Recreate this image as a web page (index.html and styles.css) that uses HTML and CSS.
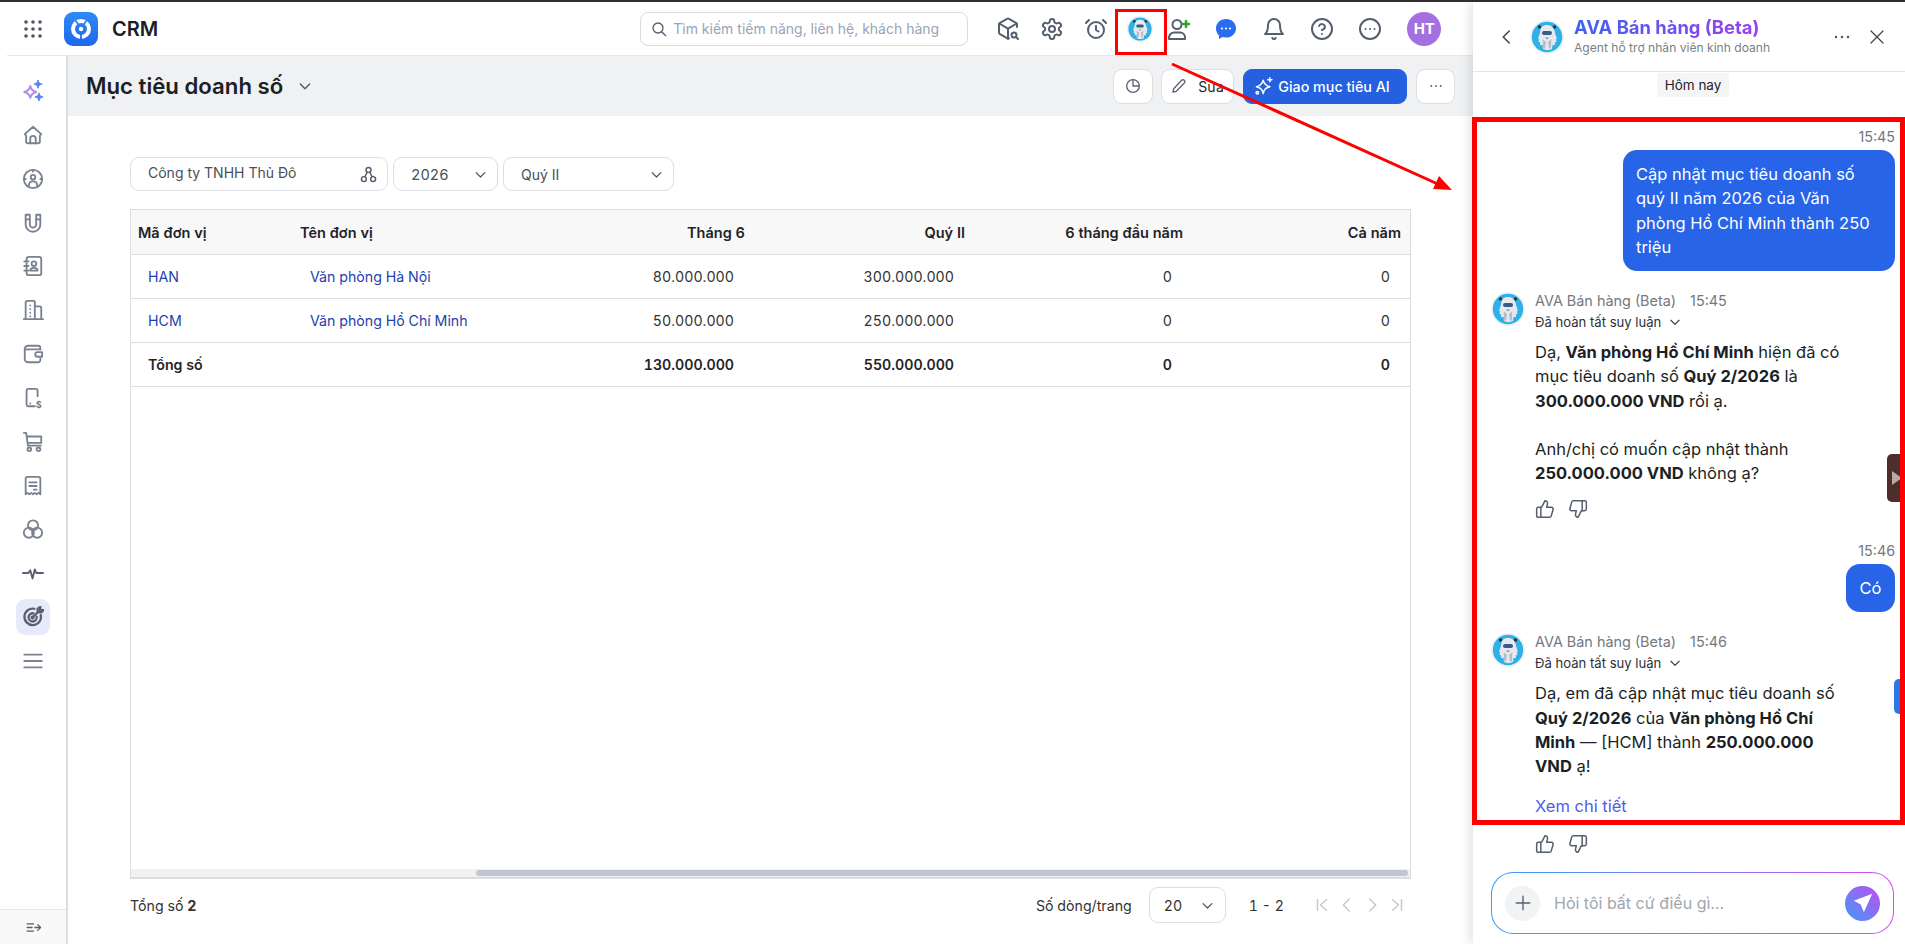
FILE: index.html
```html
<!DOCTYPE html>
<html lang="en">

<head>
    <meta charset="UTF-8">
    <meta name="viewport" content="width=device-width, initial-scale=1.0">
    <title>CRM</title>
    <link rel="stylesheet" href="styles.css">
</head>

<body>
    <!-- shared pictures -->
    <svg class="defs" width="0" height="0">
        <defs>
            <linearGradient id="logo-bg" x1="0" y1="0" x2="0" y2="1">
                <stop offset="0" stop-color="#2f8bf5" />
                <stop offset="1" stop-color="#1f66f0" />
            </linearGradient>
            <symbol id="mascot" viewBox="0 0 34 34">
                <circle cx="17" cy="17" r="17" fill="#eef2f5" />
                <circle cx="17" cy="17" r="15.2" fill="#2fb0e8" />
                <circle cx="9.500" cy="7" r="1.800" fill="#2a3542" />
                <circle cx="24.500" cy="7" r="1.800" fill="#2a3542" />
                <path d="M17 5c-4.500 0-6.500 2.500-6.800 6.500-.2 3-1.800 4.500-2 7.500l1 .5-.8 2.500 1.800.2-.2 3 2.500-.5.500 4.300c3 1.500 6 1.500 9 0l.5-4.300 2.500.5-.2-3 1.800-.2-.8-2.500 1-.5c-.2-3-1.800-4.500-2-7.500C23.500 7.500 21.500 5 17 5z" fill="#e6eaee" />
                <path d="M12.500 19c.8 3 0 6 .8 9.500h1.700l1-6.500zM21.500 19c-.8 3 0 6-.8 9.500H19l-1-6.500z" fill="#b4bec9" />
                <rect x="12" y="11" width="10" height="4" rx="2" fill="#3a5a88" />
                <path d="M15 17.500h4l-2 1.800z" fill="#7a8591" />
            </symbol>
            <symbol id="thumb-up" viewBox="0 0 24 24">
                <path d="M7 10v12" />
                <path d="M15 5.880 14 10h5.830a2 2 0 0 1 1.920 2.560l-2.330 8A2 2 0 0 1 17.500 22H4a2 2 0 0 1-2-2v-8a2 2 0 0 1 2-2h2.760a2 2 0 0 0 1.790-1.110L12 2a3.130 3.130 0 0 1 3 3.880Z" />
            </symbol>
            <symbol id="thumb-down" viewBox="0 0 24 24">
                <path d="M17 14V2" />
                <path d="M9 18.120 10 14H4.170a2 2 0 0 1-1.920-2.560l2.330-8A2 2 0 0 1 6.500 2H20a2 2 0 0 1 2 2v8a2 2 0 0 1-2 2h-2.760a2 2 0 0 0-1.790 1.110L12 22a3.130 3.130 0 0 1-3-3.880Z" />
            </symbol>
            <symbol id="chev" viewBox="0 0 24 24">
                <path d="m5 9 7 7 7-7" />
            </symbol>
        </defs>
    </svg>

    <div class="app">
        <div class="main">
            <header class="topbar">
                <svg class="ico grid-ico" viewBox="0 0 20 20">
                    <circle cx="3" cy="3" r="1.800" /><circle cx="10" cy="3" r="1.800" /><circle cx="17" cy="3" r="1.800" />
                    <circle cx="3" cy="10" r="1.800" /><circle cx="10" cy="10" r="1.800" /><circle cx="17" cy="10" r="1.800" />
                    <circle cx="3" cy="17" r="1.800" /><circle cx="10" cy="17" r="1.800" /><circle cx="17" cy="17" r="1.800" />
                </svg>
                <svg class="logo" viewBox="0 0 34 34">
                    <rect width="34" height="34" rx="9" fill="url(#logo-bg)" />
                    <circle cx="17" cy="17" r="8" fill="none" stroke="#fff" stroke-width="4" />
                    <path d="M10 6.500 17 16l7-9.500M17 16v13" fill="none" stroke="url(#logo-bg)" stroke-width="1.800" />
                    <circle cx="17" cy="17" r="2.200" fill="#fff" />
                </svg>
                <span class="brand">CRM</span>

                <div class="search">
                    <svg class="ln search-ico" viewBox="0 0 24 24"><circle cx="10.500" cy="10.500" r="7.500" /><path d="m16 16 6 6" /></svg>
                    <span>Tìm kiếm tiềm năng, liên hệ, khách hàng</span>
                </div>

                <div class="top-icons">
                    <svg class="ln top-ico" viewBox="0 0 24 24"><path d="M21 10V7.500a2 2 0 0 0-1-1.700l-7-4a2 2 0 0 0-2 0l-7 4a2 2 0 0 0-1 1.700v8a2 2 0 0 0 1 1.700l7 4a2 2 0 0 0 2 0" /><path d="M3.300 6.500 12 11.700l8.700-5.200M12 22V11.700" /><circle cx="18" cy="18" r="2.500" /><path d="m20 20 2 2" /></svg>
                    <svg class="ln top-ico" viewBox="0 0 24 24"><path d="M12.220 2h-.44a2 2 0 0 0-2 2v.18a2 2 0 0 1-1 1.730l-.43.250a2 2 0 0 1-2 0l-.15-.08a2 2 0 0 0-2.730.730l-.22.380a2 2 0 0 0 .73 2.730l.15.100a2 2 0 0 1 1 1.720v.510a2 2 0 0 1-1 1.740l-.15.090a2 2 0 0 0-.73 2.730l.22.380a2 2 0 0 0 2.730.730l.15-.08a2 2 0 0 1 2 0l.43.250a2 2 0 0 1 1 1.730V20a2 2 0 0 0 2 2h.44a2 2 0 0 0 2-2v-.18a2 2 0 0 1 1-1.730l.43-.25a2 2 0 0 1 2 0l.15.080a2 2 0 0 0 2.730-.73l.22-.39a2 2 0 0 0-.73-2.730l-.15-.08a2 2 0 0 1-1-1.740v-.5a2 2 0 0 1 1-1.740l.15-.09a2 2 0 0 0 .73-2.730l-.22-.38a2 2 0 0 0-2.730-.73l-.15.080a2 2 0 0 1-2 0l-.43-.25a2 2 0 0 1-1-1.730V4a2 2 0 0 0-2-2z" /><circle cx="12" cy="12" r="3" /></svg>
                    <svg class="ln top-ico" viewBox="0 0 24 24"><circle cx="12" cy="13" r="8" /><path d="M12 9v4l2.500 1.500M5 3 2 6M22 6l-3-3" /></svg>
                    <svg class="top-ava" viewBox="0 0 34 34"><use href="#mascot" /></svg>
                    <svg class="ln top-ico user-add" viewBox="0 0 24 24"><circle cx="10" cy="7.500" r="4.500" /><path d="M2 22v-1.500a5 5 0 0 1 5-5h6a5 5 0 0 1 5 5V22z" /><path class="plus" d="M19 4v6M16 7h6" /></svg>
                    <svg class="top-ico wide" viewBox="0 0 24 24"><path fill="#2a6cf0" d="M12 2C6.200 2 2 6.200 2 11.500c0 2.800 1.200 5.200 3 6.900V22l3.500-1.900c1.100.3 2.300.5 3.500.5 5.800 0 10-4 10-9.100C22 6.200 17.800 2 12 2z" /><circle cx="8" cy="11.500" r="1.100" fill="#fff" /><circle cx="12" cy="11.500" r="1.100" fill="#fff" /><circle cx="16" cy="11.500" r="1.100" fill="#fff" /></svg>
                    <svg class="ln top-ico wide" viewBox="0 0 24 24"><path d="M6 8a6 6 0 0 1 12 0c0 7 3 9 3 9H3s3-2 3-9" /><path d="M10.300 21a1.900 1.900 0 0 0 3.400 0" /></svg>
                    <svg class="ln top-ico wide" viewBox="0 0 24 24"><circle cx="12" cy="12" r="10" /><path d="M9.100 9a3 3 0 0 1 5.800 1c0 2-3 3-3 3" /><path d="M12 17h.01" /></svg>
                    <svg class="ln top-ico wide" viewBox="0 0 24 24"><circle cx="12" cy="12" r="10" /><path d="M7.500 12h.01M12 12h.01M16.500 12h.01" /></svg>
                    <span class="user-badge">HT</span>
                </div>
            </header>

            <div class="body">
                <nav class="sidebar">
                    <div class="nav-list">
                        <a class="nav-item"><svg class="nav-ico" viewBox="0 0 24 24"><path d="M9 6.500c.9 4 2.500 5.600 6.500 6.500-4 .9-5.600 2.500-6.500 6.500-.9-4-2.500-5.600-6.500-6.500 4-.9 5.600-2.500 6.500-6.500z" fill="none" stroke="#b08df0" stroke-width="2.200" stroke-linejoin="round" /><path d="M17.500 0c.6 2.800 1.700 3.900 4.500 4.500-2.800.6-3.900 1.700-4.500 4.500-.6-2.800-1.700-3.900-4.500-4.500 2.800-.6 3.900-1.700 4.500-4.500zM18.500 14c.6 2.800 1.700 3.900 4.500 4.500-2.800.6-3.900 1.700-4.500 4.500-.6-2.800-1.700-3.900-4.500-4.500 2.800-.6 3.900-1.700 4.500-4.500z" fill="#5c82f5" stroke="#5c82f5" stroke-linejoin="round" /></svg></a>
                        <a class="nav-item"><svg class="ln nav-ico" viewBox="0 0 24 24"><path d="M3 11 12 3l9 8c-1 .5-1.500 1-1.500 2v6a2 2 0 0 1-2 2h-11a2 2 0 0 1-2-2v-6c0-1-.5-1.500-1.500-2z" /><path d="M9 21v-5a3 3 0 0 1 6 0v5" /></svg></a>
                        <a class="nav-item"><svg class="ln nav-ico" viewBox="0 0 24 24"><circle cx="12" cy="12" r="10" /><circle cx="12" cy="10" r="2.500" /><path d="M7.500 19c0-3 2-4.500 4.500-4.500s4.500 1.500 4.500 4.500M12 2v2M2 12h2M20 12h2" /></svg></a>
                        <a class="nav-item"><svg class="ln nav-ico" viewBox="0 0 24 24"><path d="M4 3h4.500v10.500a3.500 3.500 0 0 0 7 0V3H20v10.500a8 8 0 0 1-16 0z" /><path d="M4 8h4.500M15.500 8H20" /></svg></a>
                        <a class="nav-item"><svg class="ln nav-ico" viewBox="0 0 24 24"><rect x="5" y="2" width="16" height="20" rx="2.500" /><circle cx="13" cy="9.500" r="2.500" /><path d="M9 17c0-2 1.800-3 4-3s4 1 4 3zM2.500 7H7M2.500 12H7M2.500 17H7" /></svg></a>
                        <a class="nav-item"><svg class="ln nav-ico" viewBox="0 0 24 24"><path d="M4 22V3.500A1.500 1.500 0 0 1 5.500 2h7A1.500 1.500 0 0 1 14 3.500V22" /><path d="M14 8h5.500A1.500 1.500 0 0 1 21 9.500V22M2 22h21M9 7h.01M9 11h.01M9 15h.01M9 19h.01" /></svg></a>
                        <a class="nav-item"><svg class="ln nav-ico" viewBox="0 0 24 24"><path d="M20 7V5.500A2.500 2.500 0 0 0 17.500 3h-11A3.500 3.500 0 0 0 3 6.500v11A3.500 3.500 0 0 0 6.500 21h11a2.500 2.500 0 0 0 2.500-2.500V17" /><path d="M3 7h17M22 10h-5a2 2 0 0 0 0 5h5z" /></svg></a>
                        <a class="nav-item"><svg class="ln nav-ico" viewBox="0 0 24 24"><path d="M14 21H7a2 2 0 0 1-2-2V4a2 2 0 0 1 2-2h8a2 2 0 0 1 2 2v6M9 18h.01" /><text class="nav-dollar" x="15" y="23">$</text></svg></a>
                        <a class="nav-item"><svg class="ln nav-ico" viewBox="0 0 24 24"><path d="M2 2h2.500l2 14h14M6 6h15v7H7" /><circle cx="8" cy="20" r="2" /><circle cx="18" cy="20" r="2" /></svg></a>
                        <a class="nav-item"><svg class="ln nav-ico" viewBox="0 0 24 24"><path d="M4 21V4a2 2 0 0 1 2-2h12a2 2 0 0 1 2 2v17l-2-1.500-2 1.500-2-1.500-2 1.500-2-1.500-2 1.500-2-1.500z" /><path d="M8 8h8M8 12h8M13 16h3" /></svg></a>
                        <a class="nav-item"><svg class="ln nav-ico" viewBox="0 0 24 24"><circle cx="12" cy="8" r="5.500" /><circle cx="7.500" cy="16" r="5.500" /><circle cx="16.500" cy="16" r="5.500" /></svg></a>
                        <a class="nav-item"><svg class="ln nav-ico dark-ico" viewBox="0 0 24 24"><path d="M1 12h6l2-3 2.500 9L14 8l1.500 4H23" /></svg></a>
                        <a class="nav-item active"><svg class="ln nav-ico dark-ico thick" viewBox="0 0 24 24"><path d="M20.500 10a9 9 0 1 1-7-7" /><path d="M16 11.500a4.500 4.500 0 1 1-3.500-3.500" /><path d="M12 12 20 4M17 3v4h4l2.500-2.500H20V1z" /><circle cx="11.500" cy="12.500" r="1" /></svg></a>
                        <a class="nav-item"><svg class="ln nav-ico" viewBox="0 0 24 24"><path d="M2.500 5h19M2.500 12h19M2.500 19h19" /></svg></a>
                    </div>
                    <div class="side-foot">
                        <svg class="ln foot-ico" viewBox="0 0 24 24"><path d="M3 7h9M3 12h7M3 17h9M14 12h8M18 8l4 4-4 4" /></svg>
                    </div>
                </nav>

                <main class="page">
                    <div class="page-head">
                        <h1>Mục tiêu doanh số</h1>
                        <svg class="ln title-chev" viewBox="0 0 24 24"><use href="#chev" /></svg>
                        <div class="head-actions">
                            <button class="btn btn-icon"><svg class="ln btn-ico" viewBox="0 0 24 24"><circle cx="12" cy="12" r="9.500" /><path d="M12 2.500V12h9.500" /></svg></button>
                            <button class="btn btn-edit"><svg class="ln btn-ico" viewBox="0 0 24 24"><path d="M16 3.500a2.800 2.800 0 0 1 4 4L8 20l-5 1 1-5z" /></svg>Sửa</button>
                            <button class="btn btn-ai"><svg class="ln ai-ico" viewBox="0 0 24 24"><path d="M11 5c1 4.500 3 6.500 8 8-5 1.500-7 3-8 8-1-5-3-6.500-8-8 5-1.500 7-3.500 8-8zM19 2v5M16.500 4.500h5" /><circle cx="4" cy="20" r="1.500" /></svg>Giao mục tiêu AI</button>
                            <button class="btn btn-more"><svg class="ln btn-ico dots" viewBox="0 0 24 24"><path d="M5 12h.01M12 12h.01M19 12h.01" /></svg></button>
                        </div>
                    </div>

                    <div class="page-body">
                        <div class="filters">
                            <div class="field field-org">
                                <span>Công ty TNHH Thủ Đô</span>
                                <svg class="ln org-ico" viewBox="0 0 24 24"><circle cx="12" cy="5.500" r="3.500" /><circle cx="5.500" cy="18.500" r="3.500" /><circle cx="18.500" cy="18.500" r="3.500" /><path d="M10 9l-3 6M14 9l3 6" /></svg>
                            </div>
                            <div class="field field-year"><span>2026</span><svg class="ln field-chev" viewBox="0 0 24 24"><use href="#chev" /></svg></div>
                            <div class="field field-quarter"><span>Quý II</span><svg class="ln field-chev" viewBox="0 0 24 24"><use href="#chev" /></svg></div>
                        </div>

                        <div class="table-box">
                            <table class="grid">
                                <colgroup>
                                    <col class="c1"><col class="c2"><col class="c3"><col class="c4"><col class="c5"><col class="c6">
                                </colgroup>
                                <thead>
                                    <tr>
                                        <th>Mã đơn vị</th>
                                        <th>Tên đơn vị</th>
                                        <th class="num">Tháng 6</th>
                                        <th class="num">Quý II</th>
                                        <th class="num">6 tháng đầu năm</th>
                                        <th class="num">Cả năm</th>
                                    </tr>
                                </thead>
                                <tbody>
                                    <tr>
                                        <td class="link">HAN</td>
                                        <td class="link">Văn phòng Hà Nội</td>
                                        <td class="num">80.000.000</td>
                                        <td class="num">300.000.000</td>
                                        <td class="num">0</td>
                                        <td class="num">0</td>
                                    </tr>
                                    <tr>
                                        <td class="link">HCM</td>
                                        <td class="link">Văn phòng Hồ Chí Minh</td>
                                        <td class="num">50.000.000</td>
                                        <td class="num">250.000.000</td>
                                        <td class="num">0</td>
                                        <td class="num">0</td>
                                    </tr>
                                    <tr class="total">
                                        <td>Tổng số</td>
                                        <td></td>
                                        <td class="num">130.000.000</td>
                                        <td class="num">550.000.000</td>
                                        <td class="num">0</td>
                                        <td class="num">0</td>
                                    </tr>
                                </tbody>
                            </table>
                            <div class="hscroll"><div class="hscroll-thumb"></div></div>
                        </div>

                        <div class="table-foot">
                            <span>Tổng số <b>2</b></span>
                            <div class="pager">
                                <span>Số dòng/trang</span>
                                <div class="page-size"><span>20</span><svg class="ln size-chev" viewBox="0 0 24 24"><use href="#chev" /></svg></div>
                                <span class="range">1 - 2</span>
                                <svg class="ln pg-ico" viewBox="0 0 24 24"><path d="M6 5v14M18 5l-8 7 8 7" /></svg>
                                <svg class="ln pg-ico" viewBox="0 0 24 24"><path d="m15 4-8 8 8 8" /></svg>
                                <svg class="ln pg-ico" viewBox="0 0 24 24"><path d="m9 4 8 8-8 8" /></svg>
                                <svg class="ln pg-ico" viewBox="0 0 24 24"><path d="M18 5v14M6 5l8 7-8 7" /></svg>
                            </div>
                        </div>
                    </div>
                </main>
            </div>
        </div>

        <aside class="panel">
            <div class="panel-head">
                <svg class="ln back-ico" viewBox="0 0 24 24"><path d="m15 4-8 8 8 8" /></svg>
                <svg class="panel-ava" viewBox="0 0 34 34"><use href="#mascot" /></svg>
                <div class="panel-title">
                    <div class="agent-name">AVA Bán hàng (Beta)</div>
                    <div class="agent-sub">Agent hỗ trợ nhân viên kinh doanh</div>
                </div>
                <svg class="ln dots-ico" viewBox="0 0 24 24"><path d="M4 12h.01M12 12h.01M20 12h.01" /></svg>
                <svg class="ln close-ico" viewBox="0 0 24 24"><path d="M3 3l18 18M21 3 3 21" /></svg>
            </div>

            <div class="chat">
                <div class="day-chip">Hôm nay</div>

                <div class="msg-me first">
                    <div class="msg-time">15:45</div>
                    <div class="bubble bubble-long">Cập nhật mục tiêu doanh số quý II năm 2026 của Văn phòng Hồ Chí Minh thành 250 triệu</div>
                </div>

                <div class="msg-bot">
                    <svg class="bot-ava" viewBox="0 0 34 34"><use href="#mascot" /></svg>
                    <div class="bot-main">
                        <div class="bot-meta"><span>AVA Bán hàng (Beta)</span><span>15:45</span></div>
                        <div class="bot-think">Đã hoàn tất suy luận <svg class="ln think-chev" viewBox="0 0 24 24"><use href="#chev" /></svg></div>
                        <div class="bot-text">
                            Dạ, <b>Văn phòng Hồ Chí Minh</b> hiện đã có<br>
                            mục tiêu doanh số <b>Quý 2/2026</b> là<br>
                            <b>300.000.000 VND</b> rồi ạ.<br><br>
                            Anh/chị có muốn cập nhật thành<br>
                            <b>250.000.000 VND</b> không ạ?
                        </div>
                        <div class="rate">
                            <svg class="ln rate-ico" viewBox="0 0 24 24"><use href="#thumb-up" /></svg>
                            <svg class="ln rate-ico" viewBox="0 0 24 24"><use href="#thumb-down" /></svg>
                        </div>
                    </div>
                </div>

                <div class="msg-me">
                    <div class="msg-time">15:46</div>
                    <div class="bubble bubble-short">Có</div>
                </div>

                <div class="msg-bot">
                    <svg class="bot-ava" viewBox="0 0 34 34"><use href="#mascot" /></svg>
                    <div class="bot-main">
                        <div class="bot-meta"><span>AVA Bán hàng (Beta)</span><span>15:46</span></div>
                        <div class="bot-think">Đã hoàn tất suy luận <svg class="ln think-chev" viewBox="0 0 24 24"><use href="#chev" /></svg></div>
                        <div class="bot-text">
                            Dạ, em đã cập nhật mục tiêu doanh số<br>
                            <b>Quý 2/2026</b> của <b>Văn phòng Hồ Chí</b><br>
                            <b>Minh</b> — [HCM] thành <b>250.000.000</b><br>
                            <b>VND</b> ạ!
                        </div>
                        <a class="detail-link">Xem chi tiết</a>
                        <div class="rate">
                            <svg class="ln rate-ico" viewBox="0 0 24 24"><use href="#thumb-up" /></svg>
                            <svg class="ln rate-ico" viewBox="0 0 24 24"><use href="#thumb-down" /></svg>
                        </div>
                    </div>
                </div>
            </div>

            <div class="composer">
                <span class="add-btn"><svg class="ln add-ico" viewBox="0 0 24 24"><path d="M12 3v18M3 12h18" /></svg></span>
                <span class="composer-hint">Hỏi tôi bất cứ điều gì...</span>
                <span class="send-btn"><svg class="send-ico" viewBox="0 0 24 24"><path d="M22 2 2 9.500l7.500 4L13 22z" fill="#fff" /></svg></span>
            </div>

            <div class="handle handle-dark"><span></span></div>
            <div class="handle handle-blue"></div>
        </aside>
    </div>

    <!-- red marks drawn over the screenshot -->
    <div class="mark mark-avatar"></div>
    <div class="mark mark-chat"></div>
    <svg class="mark-arrow" viewBox="0 0 1905 944">
        <path d="M1172 64 1440 185" stroke="#f00" stroke-width="3" fill="none" />
        <path d="M1452 190 1433 189 1439 176z" fill="#f00" />
    </svg>
</body>

</html>
```
FILE: styles.css
```css
html,
body {
    margin: 0;
    padding: 0;
    height: 100%;
    overflow: hidden;
}

body {
    position: relative;
    font-family: Inter, "Noto Sans", sans-serif;
    font-size: 14px;
    color: #1f2329;
    background: #fff;
}

.defs {
    position: absolute;
}

.ln {
    fill: none;
    stroke: currentColor;
    stroke-width: 2;
    stroke-linecap: round;
    stroke-linejoin: round;
}

.app {
    display: flex;
    height: 944px;
    border-top: 2px solid #2f3033;
    box-sizing: border-box;
}

.main {
    flex: 1;
    min-width: 0;
    display: flex;
    flex-direction: column;
}

/* top bar */
.topbar {
    height: 53px;
    margin-left: 7px;
    padding-left: 16px;
    display: flex;
    align-items: center;
    border-bottom: 1px solid #e6e7ea;
    flex-shrink: 0;
}

.grid-ico {
    width: 20px;
    height: 20px;
    fill: #4e5566;
}

.logo {
    width: 34px;
    height: 34px;
    margin-left: 21px;
}

.brand {
    margin-left: 14px;
    font-size: 20px;
    font-weight: 600;
    color: #1c2026;
}

.search {
    width: 328px;
    height: 34px;
    margin-left: 482px;
    padding-left: 10px;
    box-sizing: border-box;
    display: flex;
    align-items: center;
    gap: 6px;
    border: 1px solid #d9dce1;
    border-radius: 8px;
    color: #9aa3b5;
    white-space: nowrap;
}

.search-ico {
    width: 16px;
    height: 16px;
    color: #555e6e;
    flex-shrink: 0;
}

.top-icons {
    margin-left: 28px;
    display: flex;
    align-items: center;
    color: #555e6e;
}

.top-ico {
    width: 24px;
    height: 24px;
    margin-right: 20px;
}

.top-ico.user-add {
    margin: 0 23px 0 -1px;
}

.top-ico.wide {
    margin-right: 24px;
}

.top-ava {
    width: 26px;
    height: 26px;
    margin: 0 15px 0 -1px;
}

.plus {
    color: #2aa52a;
    stroke: #2aa52a;
    stroke-width: 2.500;
}

.user-badge {
    width: 34px;
    height: 34px;
    margin-left: 1px;
    border-radius: 50%;
    background: #a46fe0;
    color: #fff;
    font-size: 15px;
    font-weight: 700;
    display: flex;
    align-items: center;
    justify-content: center;
}

/* left nav */
.body {
    flex: 1;
    min-height: 0;
    display: flex;
}

.sidebar {
    width: 66px;
    flex-shrink: 0;
    display: flex;
    flex-direction: column;
    border-right: 2px solid #dcdde0;
}

.nav-list {
    flex: 1;
    padding-top: 17px;
    display: flex;
    flex-direction: column;
    align-items: center;
    gap: 7.850px;
}

.nav-item {
    width: 34px;
    height: 36px;
    display: flex;
    align-items: center;
    justify-content: center;
    border-radius: 9px;
    color: #7a8190;
}

.nav-item.active {
    background: #e6eafb;
}

.nav-ico {
    width: 22px;
    height: 22px;
}

.dark-ico {
    color: #5a6070;
}

.thick {
    stroke-width: 2.500;
}

.nav-dollar {
    font-size: 10px;
    font-weight: 700;
    fill: currentColor;
    stroke: none;
}

.side-foot {
    height: 34px;
    background: #f9f9f9;
    border-top: 1px solid #e6e7ea;
    display: flex;
    align-items: center;
    justify-content: center;
}

.foot-ico {
    width: 17px;
    height: 17px;
    color: #555e6e;
    stroke-width: 1.800;
}

/* page */
.page {
    flex: 1;
    min-width: 0;
    display: flex;
    flex-direction: column;
}

.page-head {
    height: 60px;
    padding: 0 18px 0 18px;
    flex-shrink: 0;
    background: #f0f1f3;
    display: flex;
    align-items: center;
}

h1 {
    margin: 0 0 2px;
    font-size: 22.200px;
    font-weight: 600;
    color: #1c2026;
}

.title-chev {
    width: 16px;
    height: 16px;
    margin-left: 14px;
    color: #4e5566;
}

.head-actions {
    margin-left: auto;
    display: flex;
    gap: 8px;
}

.btn {
    height: 35px;
    box-sizing: border-box;
    padding: 0;
    border: 1px solid #dcdee2;
    border-radius: 9px;
    background: #fff;
    font: inherit;
    color: #1f2329;
    display: flex;
    align-items: center;
    justify-content: center;
}

.btn-icon {
    width: 40px;
}

.btn-edit {
    width: 73px;
    gap: 11px;
}

.btn-ai {
    width: 164px;
    margin-left: 1px;
    padding-right: 6px;
    gap: 4px;
    border-color: #2560e0;
    background: #2560e0;
    color: #fff;
    font-size: 14.300px;
    font-weight: 500;
}

.btn-more {
    width: 39px;
    margin-left: 1px;
}

.btn-ico {
    width: 16px;
    height: 16px;
    color: #5b6270;
}

.btn-ico.dots {
    stroke-width: 2.800;
}

.ai-ico {
    width: 20px;
    height: 20px;
    stroke-width: 1.800;
}

.page-body {
    flex: 1;
    min-height: 0;
    padding: 41px 62px 0 62px;
    display: flex;
    flex-direction: column;
}

.filters {
    display: flex;
    gap: 5px;
    flex-shrink: 0;
}

.field {
    height: 34px;
    box-sizing: border-box;
    border: 1px solid #dcdee2;
    border-radius: 9px;
    padding: 0 9px 0 17px;
    display: flex;
    align-items: center;
    justify-content: space-between;
    color: #4a4f58;
}

.field-org {
    width: 258px;
    padding-right: 10px;
}

.field-org span {
    position: relative;
    top: -2px;
}

.field-year {
    width: 105px;
    font-size: 14.500px;
    font-variant-numeric: tabular-nums;
}

.field-quarter {
    width: 171px;
}

.org-ico {
    width: 17px;
    height: 17px;
    color: #555e6e;
}

.field-chev {
    width: 15px;
    height: 15px;
    color: #4e5566;
}

.table-box {
    flex: 1;
    min-height: 0;
    margin-top: 18px;
    border: 1px solid #dcdde0;
    display: flex;
    flex-direction: column;
    justify-content: space-between;
}

.grid {
    width: 100%;
    table-layout: fixed;
    border-collapse: collapse;
    font-variant-numeric: tabular-nums;
}

.c1 { width: 162px; }
.c2 { width: 241px; }
.c3 { width: 220px; }
.c4 { width: 220px; }
.c5 { width: 218px; }

.grid th {
    height: 44px;
    padding: 0 0 0 7px;
    background: #f8f8f8;
    font-size: 14.500px;
    font-weight: 600;
    text-align: left;
    border-bottom: 1px solid #dcdde0;
}

.grid th.num {
    padding: 0 9px 0 0;
    text-align: right;
}

.grid td {
    height: 43px;
    padding: 0 0 0 17px;
    border-bottom: 1px solid #dcdde0;
    font-size: 14.200px;
    color: #333;
}

.grid td.num {
    padding: 0 20px 0 0;
    text-align: right;
}

.grid td.link {
    color: #1f3fae;
}

.total td {
    font-weight: 600;
    color: #1f2329;
}

.hscroll {
    height: 8px;
    box-sizing: content-box;
    background: #f1f1f1;
    border-bottom: 1px solid #dcdde0;
    padding: 0 2px 0 345px;
}

.hscroll-thumb {
    height: 6px;
    margin-top: 1px;
    border-radius: 3px;
    background: #c1c6d2;
}

.table-foot {
    height: 65px;
    padding: 8px 5px 21px 0;
    box-sizing: border-box;
    flex-shrink: 0;
    display: flex;
    align-items: center;
    justify-content: space-between;
    font-size: 14.200px;
    color: #333;
    font-variant-numeric: tabular-nums;
}

.pager {
    display: flex;
    align-items: center;
}

.page-size {
    width: 77px;
    height: 36px;
    margin-left: 17px;
    padding: 0 10px 0 14px;
    box-sizing: border-box;
    border: 1px solid #dcdee2;
    border-radius: 9px;
    display: flex;
    align-items: center;
    justify-content: space-between;
}

.size-chev {
    width: 15px;
    height: 15px;
    color: #4e5566;
}

.range {
    margin: 0 29px 0 23px;
}

.pg-ico {
    width: 18px;
    height: 18px;
    margin-right: 7px;
    color: #c4c8d0;
}

.pg-ico:last-child {
    margin-right: 0;
}

/* chat panel */
.panel {
    width: 432px;
    flex-shrink: 0;
    position: relative;
    display: flex;
    flex-direction: column;
    background: #fff;
    box-shadow: -3px 0 10px rgba(0, 0, 0, .12);
}

.panel-head {
    height: 70px;
    padding: 0 20px 0 25px;
    box-sizing: border-box;
    flex-shrink: 0;
    border-bottom: 1px solid #e4e5e8;
    display: flex;
    align-items: center;
}

.back-ico {
    width: 18px;
    height: 18px;
    color: #3a3f48;
}

.panel-ava {
    width: 34px;
    height: 34px;
    margin-left: 14px;
}

.panel-title {
    margin-left: 10px;
}

.agent-name {
    font-size: 18.400px;
    line-height: 22px;
    font-weight: 700;
    background: linear-gradient(90deg, #3d63f0, #a03cf0);
    -webkit-background-clip: text;
    background-clip: text;
    color: transparent;
}

.agent-sub {
    margin-top: 1px;
    font-size: 12.100px;
    line-height: 18px;
    color: #7a7f88;
}

.dots-ico {
    width: 18px;
    height: 18px;
    margin-left: auto;
    color: #4a4f58;
    stroke-width: 3.200;
}

.close-ico {
    width: 16px;
    height: 16px;
    margin-left: 18px;
    color: #3a3f48;
    stroke-width: 1.800;
}

.chat {
    flex: 1;
    min-height: 0;
    padding: 1px 10px 0 18px;
    display: flex;
    flex-direction: column;
}

.day-chip {
    align-self: center;
    width: 72px;
    height: 24px;
    flex-shrink: 0;
    border-radius: 3px;
    background: #f5f5f6;
    font-size: 13.500px;
    line-height: 24px;
    text-align: center;
}

.msg-me {
    margin-top: 23px;
    display: flex;
    flex-direction: column;
    align-items: flex-end;
}

.msg-me.first {
    margin-top: 31px;
}

.msg-time {
    font-size: 14.300px;
    line-height: 18px;
    margin-bottom: 4px;
    color: #74787f;
}

.bubble {
    box-sizing: border-box;
    background: #2864e8;
    color: #fff;
    border-radius: 14px;
    font-size: 16.500px;
    line-height: 24.300px;
}

.bubble-long {
    width: 272px;
    padding: 12px 13px;
}

.bubble-short {
    width: 49px;
    height: 48px;
    border-radius: 14px;
    line-height: 48px;
    text-align: center;
}

.msg-bot {
    margin-top: 21px;
    display: flex;
    gap: 10px;
}

.bot-ava {
    width: 34px;
    height: 34px;
    flex-shrink: 0;
}

.bot-meta {
    display: flex;
    gap: 14px;
    font-size: 14.400px;
    line-height: 18px;
    color: #74787f;
}

.bot-think {
    margin-top: 3px;
    display: flex;
    align-items: center;
    gap: 7px;
    font-size: 13.100px;
    line-height: 18px;
    color: #2b2f36;
}

.think-chev {
    width: 14px;
    height: 14px;
    color: #3a3f48;
}

.bot-text {
    margin-top: 9px;
    font-size: 16.500px;
    line-height: 24.200px;
    color: #1c1f24;
    white-space: nowrap;
}

.bot-text b {
    font-weight: 700;
}

.rate {
    margin-top: 14px;
    display: flex;
    gap: 13px;
    color: #555e6e;
}

.rate-ico {
    width: 20px;
    height: 20px;
    stroke-width: 1.800;
}

.detail-link {
    display: block;
    margin-top: 16px;
    font-size: 16.500px;
    line-height: 24px;
    color: #4f5ce8;
}

.detail-link + .rate {
    margin-top: 16px;
}

.composer {
    height: 62px;
    margin: 0 11px 10px 18px;
    padding: 0 13px;
    box-sizing: border-box;
    flex-shrink: 0;
    border: 1.500px solid transparent;
    border-radius: 22px;
    background: linear-gradient(#fff, #fff) padding-box, linear-gradient(90deg, #3f9cf7, #7e7cf5, #d64ff0) border-box;
    display: flex;
    align-items: center;
}

.add-btn {
    width: 35px;
    height: 35px;
    border-radius: 50%;
    background: #f2f3f5;
    display: flex;
    align-items: center;
    justify-content: center;
}

.add-ico {
    width: 18px;
    height: 18px;
    color: #555e6e;
    stroke-width: 1.800;
}

.composer-hint {
    margin-left: 14px;
    font-size: 16px;
    color: #a2a6ae;
}

.send-btn {
    width: 35px;
    height: 35px;
    margin-left: auto;
    border-radius: 50%;
    background: linear-gradient(45deg, #3f9cf7, #c04cf2);
    display: flex;
    align-items: center;
    justify-content: center;
}

.send-ico {
    width: 22px;
    height: 22px;
}

.handle {
    position: absolute;
    right: 0;
    border-radius: 5px 0 0 5px;
}

.handle-dark {
    top: 452px;
    width: 18px;
    height: 48px;
    background: #4e2e2c;
}

.handle-dark span {
    position: absolute;
    left: 5px;
    top: 17px;
    border-style: solid;
    border-width: 7px 0 7px 10px;
    border-color: transparent transparent transparent #b9a8a6;
}

.handle-blue {
    top: 677px;
    width: 11px;
    height: 35px;
    background: #2a78e8;
}

/* annotations */
.mark {
    position: absolute;
    box-sizing: border-box;
    border-style: solid;
    border-color: #f00;
}

.mark-avatar {
    left: 1115px;
    top: 9px;
    width: 52px;
    height: 46px;
    border-width: 3px;
}

.mark-chat {
    left: 1472px;
    top: 117px;
    width: 433px;
    height: 708px;
    border-width: 5px;
}

.mark-arrow {
    position: absolute;
    left: 0;
    top: 0;
    width: 1905px;
    height: 944px;
    pointer-events: none;
}
```
